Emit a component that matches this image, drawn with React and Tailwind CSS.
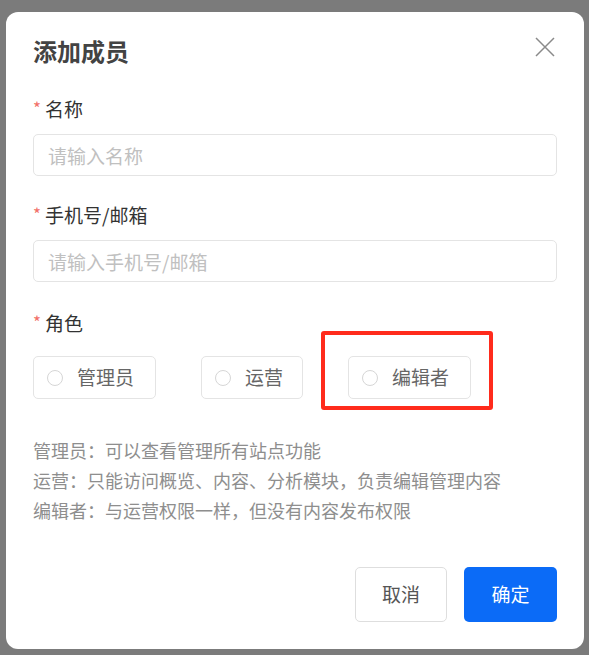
import { useState } from 'react'

const roles = [
  { key: 'admin', label: '管理员', width: 'w-[123px]' },
  { key: 'ops', label: '运营', width: 'w-[102px]' },
  { key: 'editor', label: '编辑者', width: 'w-[123px]', marked: true },
]

const notes = [
  '管理员：可以查看管理所有站点功能',
  '运营：只能访问概览、内容、分析模块，负责编辑管理内容',
  '编辑者：与运营权限一样，但没有内容发布权限',
]

function FieldLabel({ children, className = '' }) {
  return (
    <div className={`flex items-center h-6 text-[19px] text-[#333] ${className}`}>
      <span className="text-[17px] leading-none text-[#f27068] mr-[4px] -mt-[3px]">*</span>
      {children}
    </div>
  )
}

function TextInput({ placeholder, value, onChange }) {
  return (
    <input
      className="mt-[13px] w-full h-[42px] border border-[#e4e4e4] rounded-[5px] px-[14px] text-[19px] text-[#333] placeholder:text-[#c0c0c0] outline-none"
      placeholder={placeholder}
      value={value}
      onChange={(e) => onChange(e.target.value)}
    />
  )
}

export default function App() {
  const [name, setName] = useState('')
  const [contact, setContact] = useState('')
  const [role, setRole] = useState(null)

  return (
    <div
      className="w-full h-[655px] bg-[#7b7b7b] pt-[12px] pl-[6px]"
      style={{ fontFamily: '"Noto Sans CJK SC", "Noto Sans", sans-serif' }}
    >
      <div className="w-[578px] h-[637px] bg-white rounded-[12px] px-[27px] pt-[24px]">
        <div className="flex items-start justify-between h-[30px]">
          <h2 className="text-[24px] leading-[30px] font-bold text-[#434343]">添加成员</h2>
          <button className="mr-[1px] text-[#8a8a8a]">
            <svg width="22" height="22" viewBox="0 0 22 22" fill="none" stroke="currentColor" strokeWidth="1.5">
              <path d="M2 2 L20 20 M20 2 L2 20" />
            </svg>
          </button>
        </div>

        <FieldLabel className="mt-[31px]">名称</FieldLabel>
        <TextInput placeholder="请输入名称" value={name} onChange={setName} />

        <FieldLabel className="mt-[27px]">手机号/邮箱</FieldLabel>
        <TextInput placeholder="请输入手机号/邮箱" value={contact} onChange={setContact} />

        <FieldLabel className="mt-[29px]">角色</FieldLabel>
        <div className="mt-[21px] flex gap-[45px]">
          {roles.map((r) => (
            <div key={r.key} className="relative">
              <button
                onClick={() => setRole(r.key)}
                className={`${r.width} h-[43px] flex items-center pl-[13px] border border-[#e4e4e4] rounded-[5px]`}
              >
                <span
                  className={`w-4 h-4 rounded-full border ${role === r.key ? 'border-[5px] border-[#0b6bf7]' : 'border-[#d6d6d6]'}`}
                />
                <span className="ml-[14px] text-[19px] text-[#666]">{r.label}</span>
              </button>
              {r.marked && (
                <div className="absolute -left-[27px] -top-[25px] w-[172px] h-[79px] border-[4px] border-[#ff2b1c] rounded-[3px] pointer-events-none" />
              )}
            </div>
          ))}
        </div>

        <div className="mt-[36px] text-[18px] leading-[30px] text-[#8e8e8e]">
          {notes.map((n) => (
            <p key={n}>{n}</p>
          ))}
        </div>

        <div className="mt-[42px] flex justify-end gap-[17px]">
          <button className="w-[92px] h-[55px] border border-[#dedede] rounded-[5px] text-[19px] text-[#555]">
            取消
          </button>
          <button className="w-[93px] h-[55px] bg-[#0b6bf7] rounded-[5px] text-[19px] text-white">
            确定
          </button>
        </div>
      </div>
    </div>
  )
}
